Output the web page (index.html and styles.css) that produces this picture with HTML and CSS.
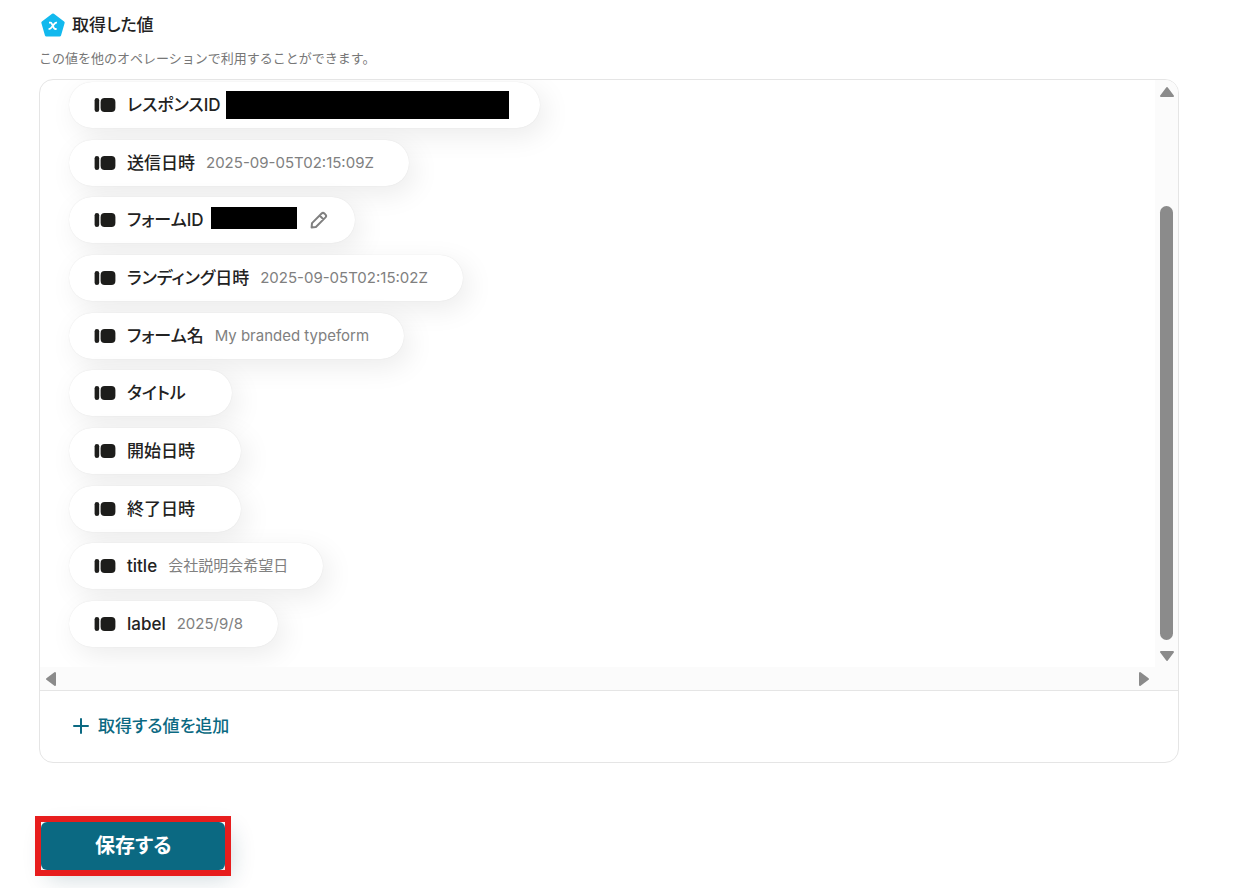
FILE: index.html
```html
<!DOCTYPE html>
<html lang="ja">

<head>
    <meta charset="utf-8">
    <title>取得した値</title>
    <link rel="stylesheet" href="styles.css">
</head>

<body>
    <svg class="symbols" aria-hidden="true">
        <symbol id="icon-value" viewBox="0 0 22 16">
            <rect x="0.6" y="1" width="4.6" height="14" rx="2.3" />
            <rect x="6.6" y="1" width="14.8" height="14" rx="4" />
        </symbol>
    </svg>

    <main class="page">
        <header class="heading">
            <svg class="heading-icon" width="26" height="26" viewBox="0 0 26 26" aria-hidden="true">
                <path d="M13 3 L23.2 10.6 L19.6 23 H6.4 L2.8 10.6 Z" fill="#12b9ee" stroke="#12b9ee" stroke-width="3" stroke-linejoin="round" />
                <path d="M9 10.6 H10.4 Q11.2 10.6 11.6 11.4 L14 16.2 Q14.4 17 15.2 17 H16.6 M17 10.6 Q15.6 10.4 14.6 11.6 L11 16 Q10.2 17 8.6 17" fill="none" stroke="#fff" stroke-width="1.8" />
            </svg>
            <h1>取得した値</h1>
        </header>
        <p class="description">この値を他のオペレーションで利用することができます。</p>

        <section class="card">
            <div class="scroll-area">
                <ul class="values">
                    <li class="value"><svg class="value-icon"><use href="#icon-value" /></svg><span class="name">レスポンスID</span><span class="mask mask-long"></span></li>
                    <li class="value"><svg class="value-icon"><use href="#icon-value" /></svg><span class="name">送信日時</span><span class="sample">2025-09-05T02:15:09Z</span></li>
                    <li class="value value-edit"><svg class="value-icon"><use href="#icon-value" /></svg><span class="name">フォームID</span><span class="mask"></span>
                        <button type="button" class="edit" aria-label="編集">
                            <svg width="20" height="20" viewBox="0 0 20 20" fill="none" stroke="#808080" stroke-width="2" stroke-linejoin="round">
                                <path d="M2.6 17.4 L3 13.1 L12.6 3.5 Q14 2.2 15.4 3.5 L16.5 4.6 Q17.8 6 16.5 7.4 L6.9 17 Z M10.6 5.5 L14.5 9.4" />
                            </svg>
                        </button>
                    </li>
                    <li class="value"><svg class="value-icon"><use href="#icon-value" /></svg><span class="name">ランディング日時</span><span class="sample">2025-09-05T02:15:02Z</span></li>
                    <li class="value"><svg class="value-icon"><use href="#icon-value" /></svg><span class="name">フォーム名</span><span class="sample">My branded typeform</span></li>
                    <li class="value"><svg class="value-icon"><use href="#icon-value" /></svg><span class="name">タイトル</span><span class="sample"></span></li>
                    <li class="value"><svg class="value-icon"><use href="#icon-value" /></svg><span class="name">開始日時</span><span class="sample"></span></li>
                    <li class="value"><svg class="value-icon"><use href="#icon-value" /></svg><span class="name">終了日時</span><span class="sample"></span></li>
                    <li class="value"><svg class="value-icon"><use href="#icon-value" /></svg><span class="name">title</span><span class="sample">会社説明会希望日</span></li>
                    <li class="value"><svg class="value-icon"><use href="#icon-value" /></svg><span class="name">label</span><span class="sample">2025/9/8</span></li>
                </ul>
                <div class="bar bar-y">
                    <svg class="arrow" viewBox="0 0 16 12"><path d="M8 2 L14 10 H2 Z" /></svg>
                    <div class="track"><div class="thumb"></div></div>
                    <svg class="arrow" viewBox="0 0 16 12"><path d="M8 10 L14 2 H2 Z" /></svg>
                </div>
                <div class="bar bar-x">
                    <svg class="arrow" viewBox="0 0 12 16"><path d="M2 8 L10 2 V14 Z" /></svg>
                    <svg class="arrow" viewBox="0 0 12 16"><path d="M10 8 L2 2 V14 Z" /></svg>
                </div>
                <div class="corner"></div>
            </div>
            <div class="card-footer">
                <button type="button" class="add">
                    <svg width="18" height="18" viewBox="0 0 18 18" fill="none" stroke="currentColor" stroke-width="2" stroke-linecap="round" aria-hidden="true">
                        <path d="M9 2 V16 M2 9 H16" />
                    </svg>
                    取得する値を追加
                </button>
            </div>
        </section>

        <div class="actions">
            <div class="highlight">
                <button type="submit" class="save">保存する</button>
            </div>
        </div>
    </main>
</body>

</html>
```

FILE: styles.css
```css
* {
    box-sizing: border-box;
}

body {
    margin: 0;
    background: #fff;
    color: #222;
    font-family: Inter, "Noto Sans CJK JP", sans-serif;
    font-feature-settings: "palt";
}

button {
    padding: 0;
    border: 0;
    background: none;
    font: inherit;
    font-feature-settings: inherit;
    cursor: pointer;
}

.symbols {
    position: absolute;
    width: 0;
    height: 0;
}

.page {
    padding: 12px 66px 0 39px;
}

.heading {
    display: flex;
    align-items: center;
    gap: 6px;
    height: 26px;
    padding-left: 1px;
}

h1 {
    margin: 0;
    font-size: 17px;
    line-height: 26px;
    font-weight: 500;
}

.description {
    margin: 10px 0 11px;
    color: #777;
    font-size: 13px;
    line-height: 20px;
    font-feature-settings: normal;
}

.card {
    border: 1px solid #e5e5e5;
    border-radius: 14px;
    overflow: hidden;
}

.scroll-area {
    display: grid;
    grid-template-columns: 1fr 23px;
    grid-template-rows: 1fr 23px;
    height: 610px;
}

.values {
    display: flex;
    flex-direction: column;
    align-items: flex-start;
    justify-content: space-between;
    margin: 0;
    padding: 2px 29px 20px;
    overflow: hidden;
    list-style: none;
}

.value {
    display: flex;
    align-items: center;
    height: 46px;
    padding: 0 35px 0 25px;
    border-radius: 23px;
    background: #fff;
    box-shadow: 0 0 1px rgba(0, 0, 0, .12), 6px 8px 28px rgba(0, 0, 0, .08);
}

.value-icon {
    width: 22px;
    height: 16px;
    margin-right: 11px;
    fill: #1d1d1b;
}

.name {
    font-size: 17px;
    line-height: 26px;
    font-weight: 500;
}

.sample {
    margin-left: 11px;
    color: #808080;
    font-size: 15px;
    line-height: 24px;
}

.mask {
    width: 86px;
    height: 22px;
    margin: 0 12px 4px 7px;
    background: #000;
}

.mask-long {
    width: 283px;
    height: 28px;
    margin: 0 -4px 0 5px;
}

.value-edit {
    padding-right: 26px;
}

.edit {
    height: 20px;
}

.bar {
    display: flex;
    justify-content: space-between;
    align-items: center;
    background: #fbfbfb;
}

.bar-y {
    flex-direction: column;
    padding: 6px 0 5px;
}

.bar-x {
    padding: 0 5px;
}

.arrow {
    width: 16px;
    height: 12px;
    fill: #8b8b8b;
    stroke: #8b8b8b;
    stroke-width: 2;
    stroke-linejoin: round;
}

.bar-x .arrow {
    width: 12px;
    height: 16px;
}

.track {
    display: flex;
    align-items: flex-end;
    flex: 1;
    padding-bottom: 10px;
}

.thumb {
    width: 13px;
    height: 80%;
    border-radius: 7px;
    background: #8b8b8b;
}

.corner {
    background: #fbfbfb;
}

.card-footer {
    padding: 22px 32px 23px;
    border-top: 1px solid #e5e5e5;
}

.add {
    display: flex;
    align-items: center;
    gap: 8px;
    color: #0b6982;
    font-size: 17px;
    line-height: 26px;
    font-weight: 500;
}

.actions {
    display: flex;
    padding: 59px 2px 18px;
}

/* red marker around the button */
.highlight {
    position: relative;
}

.highlight::after {
    content: "";
    position: absolute;
    inset: -6px;
    border: 6px solid #e71d1d;
    pointer-events: none;
}

.save {
    display: block;
    padding: 10px 54px;
    border-radius: 6px;
    background: #0b6982;
    box-shadow: 6px 8px 24px rgba(11, 60, 82, .2);
    color: #fff;
    font-size: 20px;
    line-height: 28px;
    font-weight: 700;
}
```
